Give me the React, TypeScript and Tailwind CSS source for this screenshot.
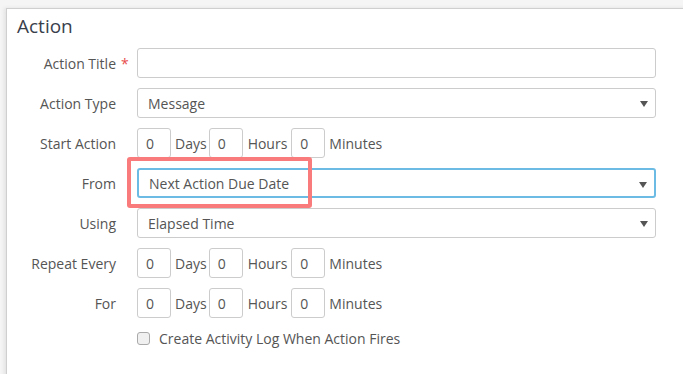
import React from "react";

const font = { fontFamily: '"Open Sans", "Liberation Sans", sans-serif' };

function Caret() {
  return (
    <svg width="8" height="6" viewBox="0 0 8 6" className="absolute right-[7px] top-[12px]">
      <path d="M0 0 H8 L4 6 Z" fill="#555" />
    </svg>
  );
}

function Select({ value, focused }: { value: string; focused?: boolean }) {
  return (
    <div
      className={
        "relative w-[519px] h-[30px] rounded-[3px] bg-white flex items-center pl-[10px] text-[14px] text-[#555] " +
        (focused ? "border-2 border-[#6cbbe4] pl-[9px]" : "border border-[#ccc]")
      }
    >
      {value}
      <Caret />
    </div>
  );
}

function Small() {
  return (
    <div className="w-[34px] h-[30px] rounded-[3px] border border-[#ccc] bg-white flex items-center pl-[8px] text-[14px] text-[#555]">
      0
    </div>
  );
}

function Duration() {
  return (
    <div className="flex items-center text-[14px] text-[#555]">
      <Small />
      <span className="ml-[4px] mr-[2px]">Days</span>
      <Small />
      <span className="ml-[5px] mr-[4px]">Hours</span>
      <Small />
      <span className="ml-[4px]">Minutes</span>
    </div>
  );
}

function Row({ label, children, req }: { label: string; children: React.ReactNode; req?: boolean }) {
  return (
    <div className="flex items-center h-[30px]">
      <div className="relative w-[109px] text-right text-[14px] text-[#555]">
        {label}
        {req && <span className="absolute left-[114px] top-0 text-[#e74c4c]">*</span>}
      </div>
      <div className="ml-[21px] relative">{children}</div>
    </div>
  );
}

export default function App() {
  return (
    <div style={font} className="w-[683px] h-[374px] bg-[#f5f5f5] overflow-hidden pl-[6px] pt-[8px]">
      <div className="w-[700px] h-[400px] bg-white border-l border-t border-[#cfcfcf] shadow-[-2px_0_4px_rgba(0,0,0,0.08)]">
        <div className="pl-[10px] pt-[5px] text-[19px] leading-[25px] text-[#39404b]">Action</div>
        <div className="mt-[9px] flex flex-col gap-[10px]">
          <Row label="Action Title" req>
            <div className="w-[519px] h-[30px] rounded-[3px] border border-[#ccc] bg-white" />
          </Row>
          <Row label="Action Type">
            <Select value="Message" />
          </Row>
          <Row label="Start Action">
            <Duration />
          </Row>
          <Row label="From">
            <Select value="Next Action Due Date" focused />
            <div className="absolute left-[-10px] top-[-11px] w-[185px] h-[51px] border-[4px] border-[#fa7b7b] rounded-[3px]" />
          </Row>
          <Row label="Using">
            <Select value="Elapsed Time" />
          </Row>
          <Row label="Repeat Every">
            <Duration />
          </Row>
          <Row label="For">
            <Duration />
          </Row>
        </div>
        <div className="mt-[10px] ml-[130px] flex items-center text-[14px] text-[#555]">
          <div className="w-[13px] h-[13px] rounded-[3px] border border-[#aaa] bg-[#f0f0f0]" />
          <span className="ml-[9px]">Create Activity Log When Action Fires</span>
        </div>
      </div>
    </div>
  );
}
